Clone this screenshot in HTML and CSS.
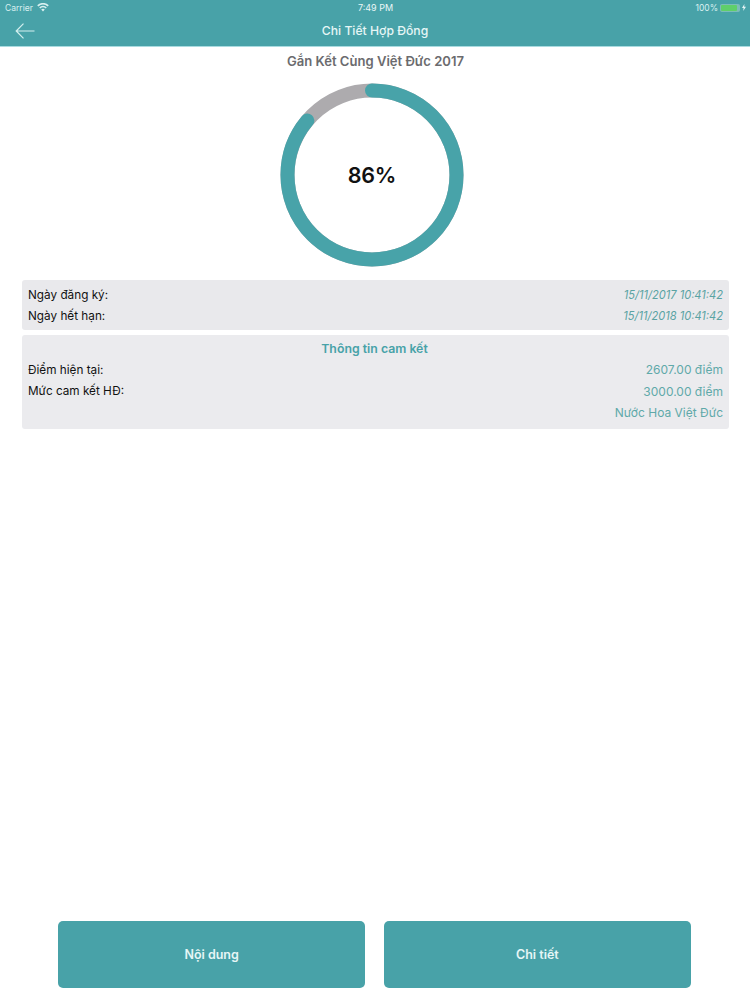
FILE: index.html
```html
<!DOCTYPE html>
<html lang="vi">
<head>
<meta charset="utf-8">
<title>Chi Tiết Hợp Đồng</title>
<link rel="stylesheet" href="styles.css">
</head>
<body>
<div class="page">
  <header class="header">
    <div class="status">
      <div class="status-left">
        <span>Carrier</span>
        <svg class="wifi" width="12" height="9" viewBox="0 0 12 9"><path d="M6 8.6 4.2 6.6a2.6 2.6 0 0 1 3.6 0zM3.3 5.6 2.2 4.4a5.4 5.4 0 0 1 7.6 0L8.7 5.6a3.9 3.9 0 0 0-5.4 0zM1.4 3.5.2 2.3a8.2 8.2 0 0 1 11.6 0l-1.2 1.2a6.5 6.5 0 0 0-9.2 0z" fill="#d8f0f0"/></svg>
      </div>
      <div class="status-time">7:49 PM</div>
      <div class="status-right">
        <span>100%</span>
        <span class="battery"><span class="battery-fill"></span></span>
        <svg width="4" height="7" viewBox="0 0 4 7"><path d="M2.4 0 0 4h1.6L1.2 7 4 2.8H2.2z" fill="#e4f4f4"/></svg>
      </div>
    </div>
    <div class="nav">
      <svg class="back" width="20" height="16" viewBox="0 0 20 16"><path d="M8.5.7 1.2 8l7.3 7.3M1.2 8H19.5" fill="none" stroke="#d4efef" stroke-width="1.2"/></svg>
      <div class="nav-title">Chi Tiết Hợp Đồng</div>
    </div>
  </header>
  <main class="main">
    <h1 class="title">Gắn Kết Cùng Việt Đức 2017</h1>
    <div class="ring">
      <svg width="184" height="184" viewBox="0 0 184 184">
        <circle cx="92" cy="92" r="84.5" fill="none" stroke="#adabae" stroke-width="14"/>
        <circle cx="92" cy="92" r="84.5" fill="none" stroke="#48a3a9" stroke-width="14" stroke-linecap="round" stroke-dasharray="456.6 530.9" transform="rotate(-90 92 92)"/>
      </svg>
      <div class="ring-label">86%</div>
    </div>
    <section class="card card-dates">
      <div class="row"><span>Ngày đăng ký:</span><em>15/11/2017 10:41:42</em></div>
      <div class="row"><span>Ngày hết hạn:</span><em>15/11/2018 10:41:42</em></div>
    </section>
    <section class="card card-info">
      <div class="card-heading">Thông tin cam kết</div>
      <div class="row row-wide"><span>Điểm hiện tại:</span><b>2607.00 điểm</b></div>
      <div class="row row-wide"><span>Mức cam kết HĐ:</span><b>3000.00 điểm</b></div>
      <div class="row row-wide"><span></span><b>Nước Hoa Việt Đức</b></div>
    </section>
  </main>
  <footer class="actions">
    <button class="btn">Nội dung</button>
    <button class="btn">Chi tiết</button>
  </footer>
</div>
</body>
</html>
```

FILE: styles.css
```css
* { box-sizing: border-box; }
html, body { margin: 0; padding: 0; background: #fff; }
body { font-family: Inter, "Liberation Sans", sans-serif; color: #111; }
.page { width: 750px; height: 1000px; display: flex; flex-direction: column; overflow: hidden; }

.header { height: 47px; background: #48a2a8; border-bottom: 1px solid #a9dbe0; flex: none; }
.status { height: 15px; padding: 0 4px 0 5px; display: grid; grid-template-columns: 1fr auto 1fr; align-items: center; font-size: 8.5px; color: #d8f0f0; }
.status-left { display: flex; align-items: center; gap: 4px; }
.status-time { color: #eaf7f7; font-size: 9px; }
.status-right { display: flex; align-items: center; justify-content: flex-end; gap: 2px; }
.battery { width: 20px; height: 8px; padding: 1px; border-radius: 2px; background: #7cbcb8; display: block; }
.battery-fill { display: block; width: 16px; height: 6px; border-radius: 1px; background: #5fcf6a; }

.nav { height: 31px; display: flex; align-items: center; justify-content: center; position: relative; }
.back { position: absolute; left: 15px; top: 8px; }
.nav-title { font-size: 12.2px; font-weight: 500; color: #e6f6f6; }

.main { flex: 1; padding: 0 21px 0 22px; display: flex; flex-direction: column; align-items: stretch; }
.title { margin: 6px 0 0; height: 16px; line-height: 16px; text-align: center; font-size: 13.05px; font-weight: 600; color: #6b6b6e; }
.ring { width: 184px; height: 184px; margin: 14px 0 0 258px; position: relative; }
.ring svg { display: block; }
.ring-label { position: absolute; inset: 0; display: flex; align-items: center; justify-content: center; font-size: 21.5px; font-weight: 600; letter-spacing: -0.2px; color: #111; }

.card { background: #e9e9ec; border-radius: 3px; padding: 0 6px; font-size: 11.75px; }
.card-dates { margin-top: 13px; height: 50px; padding-top: 4px; }
.card-info { margin-top: 5px; height: 94px; padding-top: 5px; background: #ebebee; }
.row { height: 21px; display: flex; align-items: center; justify-content: space-between; }
.row-wide { height: 21.5px; }
.row em { font-size: 11.1px; font-style: italic; color: #5aa3a3; }
.row b { font-weight: 400; color: #5fa9a9; font-size: 12px; }
.card-heading { height: 19px; line-height: 17px; text-align: center; font-size: 12.3px; font-weight: 600; color: #48a2a8; padding-right: 2px; }

.actions { flex: none; height: 79px; padding: 0 59px 12px 58px; display: flex; gap: 18.5px; }
.btn { flex: 1; height: 67px; border: 0; border-radius: 5px; background: #48a2a8; color: #e6f6f6; font: 600 12.5px Inter, "Liberation Sans", sans-serif; padding: 0; }
```
